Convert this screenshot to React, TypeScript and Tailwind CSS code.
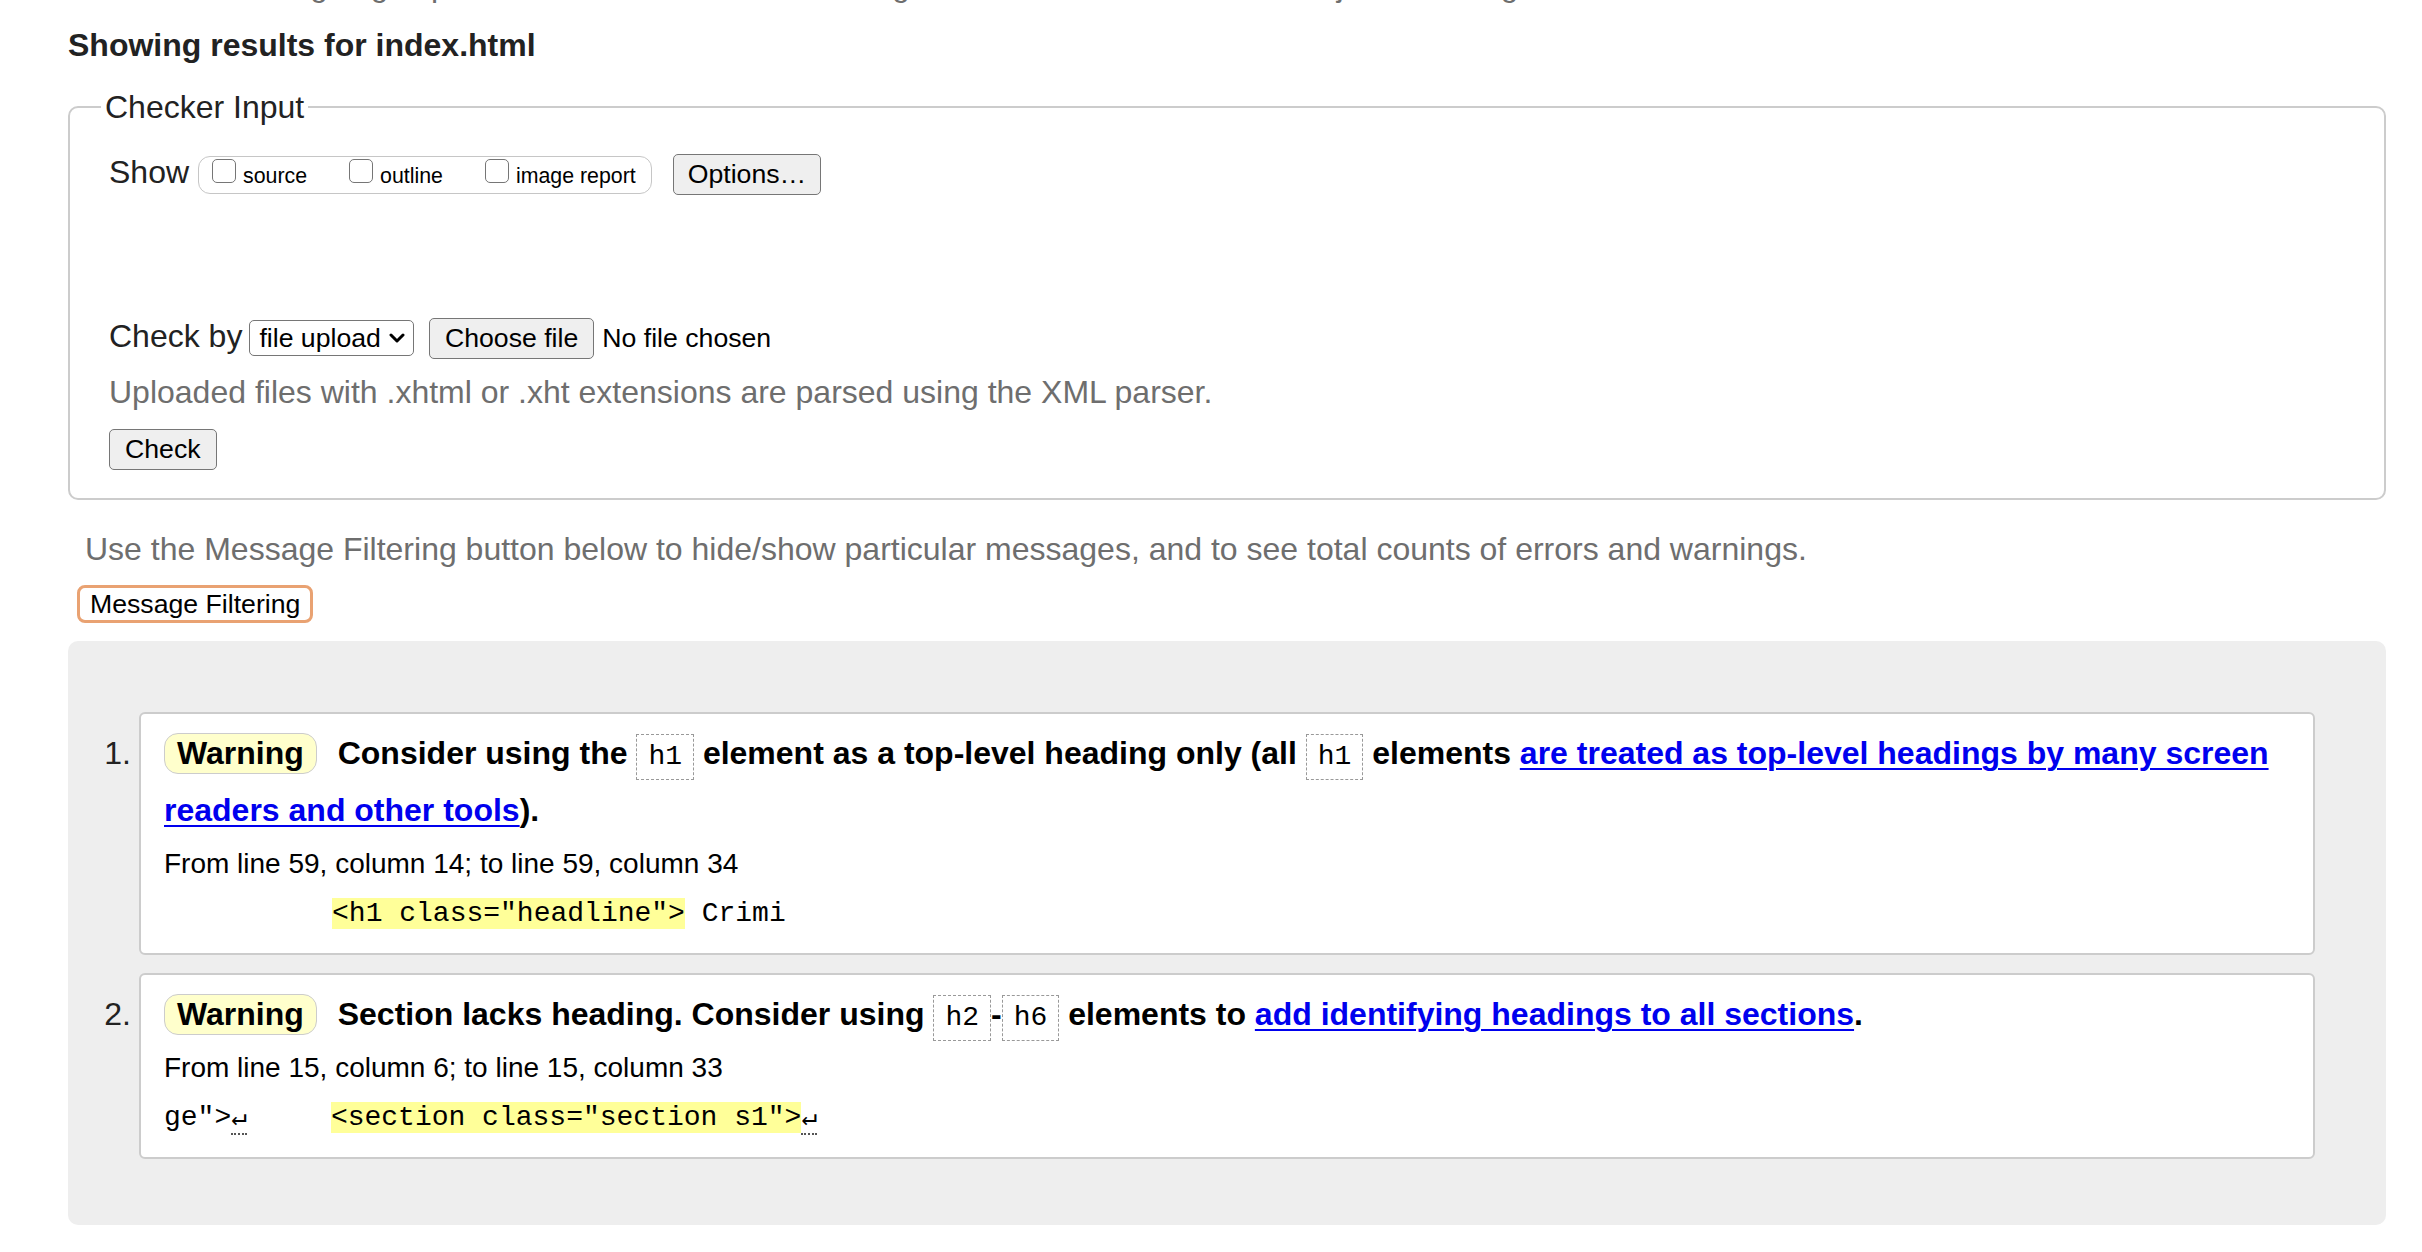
import React from "react";

const mono = "font-['Liberation_Mono','Courier_New',monospace]";

function Checkbox({ label }: { label: string }) {
  return (
    <span className="flex items-baseline gap-[7px]">
      <span className="h-[24px] w-[24px] shrink-0 rounded-[5px] border-[1.5px] border-[#767676] bg-white" />
      <span className="text-[21.33px] leading-[24px] text-black">{label}</span>
    </span>
  );
}

function Chip({ children }: { children: React.ReactNode }) {
  return (
    <code className="inline-block border border-dashed border-[#999] px-[11px] font-['Liberation_Mono','Courier_New',monospace] text-[28px] font-normal leading-[44px] text-black">
      {children}
    </code>
  );
}

function Badge() {
  return (
    <span className="mr-[12px] inline-block rounded-[14px] border border-[#ccc] bg-[#ffffcc] px-[12px] leading-[39px]">
      Warning
    </span>
  );
}

function Ret() {
  return <span className="border-b-2 border-dotted border-[#555] text-[26px] leading-none">↵</span>;
}

function Message({ n, children }: { n: number; children: React.ReactNode }) {
  return (
    <li className="flex items-baseline">
      <span className="w-[71px] shrink-0 pr-[8px] text-right text-[32px] leading-[36px] text-[#222]">{n}.</span>
      <div className="min-w-0 flex-1 rounded-[6px] border-2 border-[#ccc] bg-white pl-[23px] pr-[23px] pt-[11px] pb-[19px]">
        {children}
      </div>
    </li>
  );
}

const btn =
  "rounded-[5px] border border-[#767676] bg-[#efefef] text-[26.67px] leading-[39px] text-black";

export default function App() {
  return (
    <div className="min-h-screen overflow-hidden bg-white pl-[68px] pr-[36px] font-['Liberation_Sans',Arial,Helvetica,sans-serif]">
      {/* intro line, scrolled mostly out of view */}
      <p className="-mt-[31px] whitespace-nowrap text-[32px] leading-[32px] text-[#6e6e6e]">
        This tool is an ongoing experiment in better HTML checking, and its behavior remains subject to change
      </p>

      <h2 className="mt-[26px] text-[32px] font-bold leading-[36px] text-[#222]">Showing results for index.html</h2>

      <fieldset className="mt-[26px] rounded-[10px] border-2 border-[#ccc] pl-[39px] pr-[39px] pb-[28px]">
        <legend className="-ml-[8px] px-[4px] text-[32px] leading-[36px] text-[#222]">Checker Input</legend>

        {/* Show options */}
        <div className="mt-[29px] flex items-baseline">
          <span className="text-[32px] leading-[36px] text-[#222]">Show</span>
          <div className="ml-[9px] flex items-baseline gap-[42px] rounded-[12px] border-[1.5px] border-[#c6c6c6] pt-[2px] pb-[5px] pl-[13px] pr-[15px]">
            <Checkbox label="source" />
            <Checkbox label="outline" />
            <Checkbox label="image report" />
          </div>
          <button className={`ml-[21px] px-[14px] ${btn}`}>Options…</button>
        </div>

        {/* Check by */}
        <div className="mt-[123px] flex items-baseline">
          <span className="text-[32px] leading-[36px] text-[#222]">Check by</span>
          <span className="ml-[7px] inline-flex items-center rounded-[5px] border border-[#767676] bg-white pl-[9px] pr-[8px] text-[26.67px] leading-[34px] text-black">
            file upload
            <svg className="ml-[8px] h-[10px] w-[16px]" viewBox="0 0 16 10" fill="none">
              <path d="M2 2 L8 8 L14 2" stroke="#000" strokeWidth="3" strokeLinecap="round" strokeLinejoin="round" />
            </svg>
          </span>
          <button className={`ml-[15px] px-[15px] ${btn}`}>Choose file</button>
          <span className="ml-[8px] text-[26.67px] leading-[36px] text-black">No file chosen</span>
        </div>

        <p className="mt-[15px] text-[32px] leading-[36px] text-[#6e6e6e]">
          Uploaded files with .xhtml or .xht extensions are parsed using the XML parser.
        </p>

        <div className="mt-[19px]">
          <button className={`px-[15px] ${btn}`}>Check</button>
        </div>
      </fieldset>

      <p className="mt-[31px] ml-[17px] text-[32px] leading-[36px] text-[#6e6e6e]">
        Use the Message Filtering button below to hide/show particular messages, and to see total counts of errors and warnings.
      </p>

      <button className="mt-[18px] ml-[9px] block rounded-[8px] border-[3px] border-[#e9a272] bg-white px-[10px] text-[26.67px] leading-[32px] text-black">
        Message Filtering
      </button>

      {/* results */}
      <div className="mt-[18px] rounded-[10px] bg-[#eee] pt-[71px] pb-[66px] pr-[71px]">
        <ol className="flex flex-col gap-[18px]">
          <Message n={1}>
            <p className="text-[32px] font-bold leading-[57px] text-black">
              <Badge /> Consider using the <Chip>h1</Chip> element as a top-level heading only (all <Chip>h1</Chip>{" "}
              elements{" "}
              <a href="#" className="text-[#0000ee] underline decoration-2 underline-offset-[4px]">
                are treated as top-level headings by many screen readers and other tools
              </a>
              ).
            </p>
            <p className="mt-[5px] text-[28px] leading-[40px] text-black">From line 59, column 14; to line 59, column 34</p>
            <p className={`mt-[10px] whitespace-pre text-[28px] leading-[40px] text-black ${mono}`}>
              {"          "}
              <mark className="bg-[#ffff99] text-black">{'<h1 class="headline">'}</mark>
              {" Crimi"}
            </p>
          </Message>

          <Message n={2}>
            <p className="text-[32px] font-bold leading-[57px] text-black">
              <Badge /> Section lacks heading. Consider using <Chip>h2</Chip>-<Chip>h6</Chip> elements to{" "}
              <a href="#" className="text-[#0000ee] underline decoration-2 underline-offset-[4px]">
                add identifying headings to all sections
              </a>
              .
            </p>
            <p className="mt-[5px] text-[28px] leading-[40px] text-black">From line 15, column 6; to line 15, column 33</p>
            <p className={`mt-[10px] whitespace-pre text-[28px] leading-[40px] text-black ${mono}`}>
              {'ge">'}
              <Ret />
              {"     "}
              <mark className="bg-[#ffff99] text-black">{'<section class="section s1">'}</mark>
              <Ret />
            </p>
          </Message>
        </ol>
      </div>
    </div>
  );
}
